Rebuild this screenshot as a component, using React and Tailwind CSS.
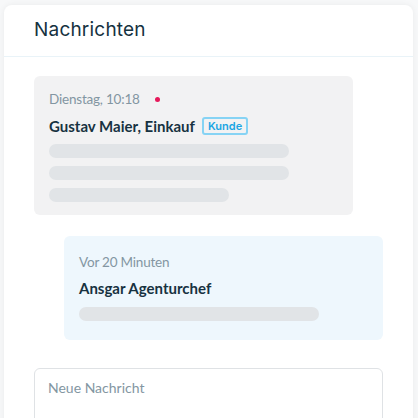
import React from 'react'

const Bar = ({ w }) => <div className={`h-[14px] rounded-full bg-[#e1e4e7] ${w}`} />

export default function App() {
  return (
    <div className="w-[418px] h-[418px] bg-[#f7f8f9] pt-[5px] pl-[4px] overflow-hidden" style={{ fontFamily: 'Lato, "Noto Sans", sans-serif' }}>
      <div className="w-[409px] h-[440px] bg-white rounded-[8px] shadow-[0_0_6px_rgba(0,0,0,0.06)]">
        <div className="h-[52px] border-b border-[#e9f3f8] pl-[30px] flex items-center">
          <h1 className="text-[19px] text-[#15323f] font-normal tracking-[0.2px]" style={{ fontFamily: 'Inter, sans-serif' }}>
            Nachrichten
          </h1>
        </div>

        <div className="pl-[30px] pt-[19px] flex flex-col">
          <div className="w-[319px] h-[139px] bg-[#f2f2f3] rounded-[6px] px-[15px] pt-[14px]">
            <div className="flex items-center gap-[15px] text-[13.5px] text-[#8396a2] leading-[18px]">
              <span className="tracking-[-0.2px]">Dienstag, 10:18</span>
              <span className="w-[5px] h-[5px] rounded-full bg-[#e6195a]" />
            </div>
            <div className="flex items-center gap-[7px] mt-[8px]">
              <span className="text-[15px] font-bold text-[#173241] leading-[20px]">Gustav Maier, Einkauf</span>
              <span className="border-2 border-[#86d3f4] rounded-[3px] px-[4px] h-[18px] flex items-center text-[11px] font-semibold text-[#1ba5e3]" style={{ fontFamily: 'Inter, sans-serif' }}>
                Kunde
              </span>
            </div>
            <div className="flex flex-col gap-[8px] mt-[8px]">
              <Bar w="w-[240px]" />
              <Bar w="w-[240px]" />
              <Bar w="w-[180px]" />
            </div>
          </div>

          <div className="ml-[30px] mt-[21px] w-[319px] h-[104px] bg-[#eef7fd] rounded-[6px] px-[15px] pt-[17px]">
            <div className="text-[13.5px] tracking-[-0.2px] text-[#8396a2] leading-[18px]">Vor 20 Minuten</div>
            <div className="text-[15px] font-bold text-[#173241] leading-[20px] mt-[7px]">Ansgar Agenturchef</div>
            <div className="mt-[9px]">
              <Bar w="w-[240px]" />
            </div>
          </div>

          <div className="mt-[28px] w-[349px] h-[60px] border border-[#dfe2e5] rounded-[6px] px-[13px] pt-[10px]">
            <div className="text-[14px] text-[#8396a2] leading-[18px]">Neue Nachricht</div>
          </div>
        </div>
      </div>
    </div>
  )
}
